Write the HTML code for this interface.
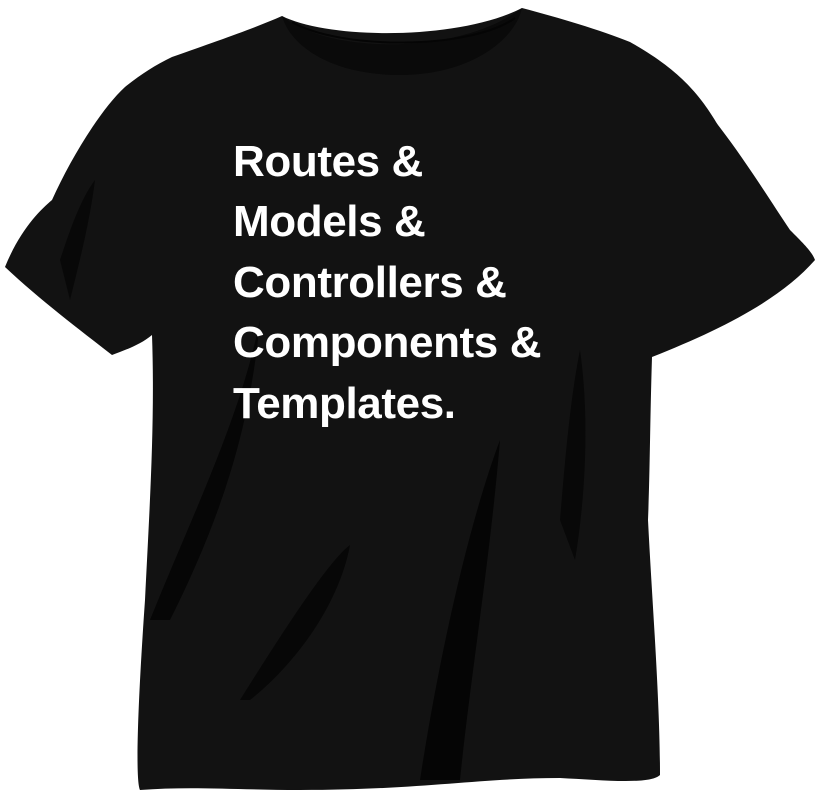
<!DOCTYPE html>
<html><head><style>
html,body{margin:0;padding:0;background:#fff;width:816px;height:794px;overflow:hidden}
svg{position:absolute;left:0;top:0}
.t{position:absolute;left:233px;font-family:"Liberation Sans",Arial,sans-serif;font-weight:bold;font-size:44px;color:#fff;letter-spacing:-0.4px;line-height:1;white-space:nowrap}
</style></head><body>
<svg width="816" height="794" viewBox="0 0 816 794">
<path d="M282,16 C330,40 460,40 522,8 C560,18 600,30 630,42 C680,70 700,95 718,125 C745,160 770,200 790,230 C805,245 812,252 815,260 C780,300 720,330 652,357 C650,420 650,470 648,520 C652,600 660,700 660,775 C650,785 600,780 560,778 C480,778 420,790 300,790 C240,790 190,786 140,790 C135,780 138,700 145,600 C150,500 155,420 152,335 C140,345 125,350 112,355 C80,330 40,300 5,267 C20,230 40,210 52,200 C70,160 100,110 125,87 C140,75 155,65 172,57 C220,40 255,28 282,16 Z" fill="#121212"/>
<path d="M282,16 C330,55 460,55 522,8 C515,40 470,75 400,75 C330,75 290,45 282,16 Z" fill="#0a0a0a"/>
<path d="M292,22 C340,50 470,50 515,18" stroke="#050505" stroke-width="2" fill="none"/>
<path d="M150,620 C190,520 240,420 260,320 C250,430 220,520 170,620 Z" fill="#060606"/>
<path d="M420,780 C440,650 470,520 500,440 C490,560 470,680 460,780 Z" fill="#050505"/>
<path d="M240,700 C290,620 330,560 350,545 C340,600 300,660 250,700 Z" fill="#070707"/>
<path d="M560,520 C565,460 570,400 580,350 C590,420 585,500 575,560 Z" fill="#080808"/>
<path d="M60,260 C70,230 80,200 95,180 C90,220 80,260 70,300 Z" fill="#080808"/>
</svg>
<div class="t" style="top:140px">Routes &amp;</div>
<div class="t" style="top:200px">Models &amp;</div>
<div class="t" style="top:261px">Controllers &amp;</div>
<div class="t" style="top:321px">Components &amp;</div>
<div class="t" style="top:382px">Templates.</div>
</body></html>
